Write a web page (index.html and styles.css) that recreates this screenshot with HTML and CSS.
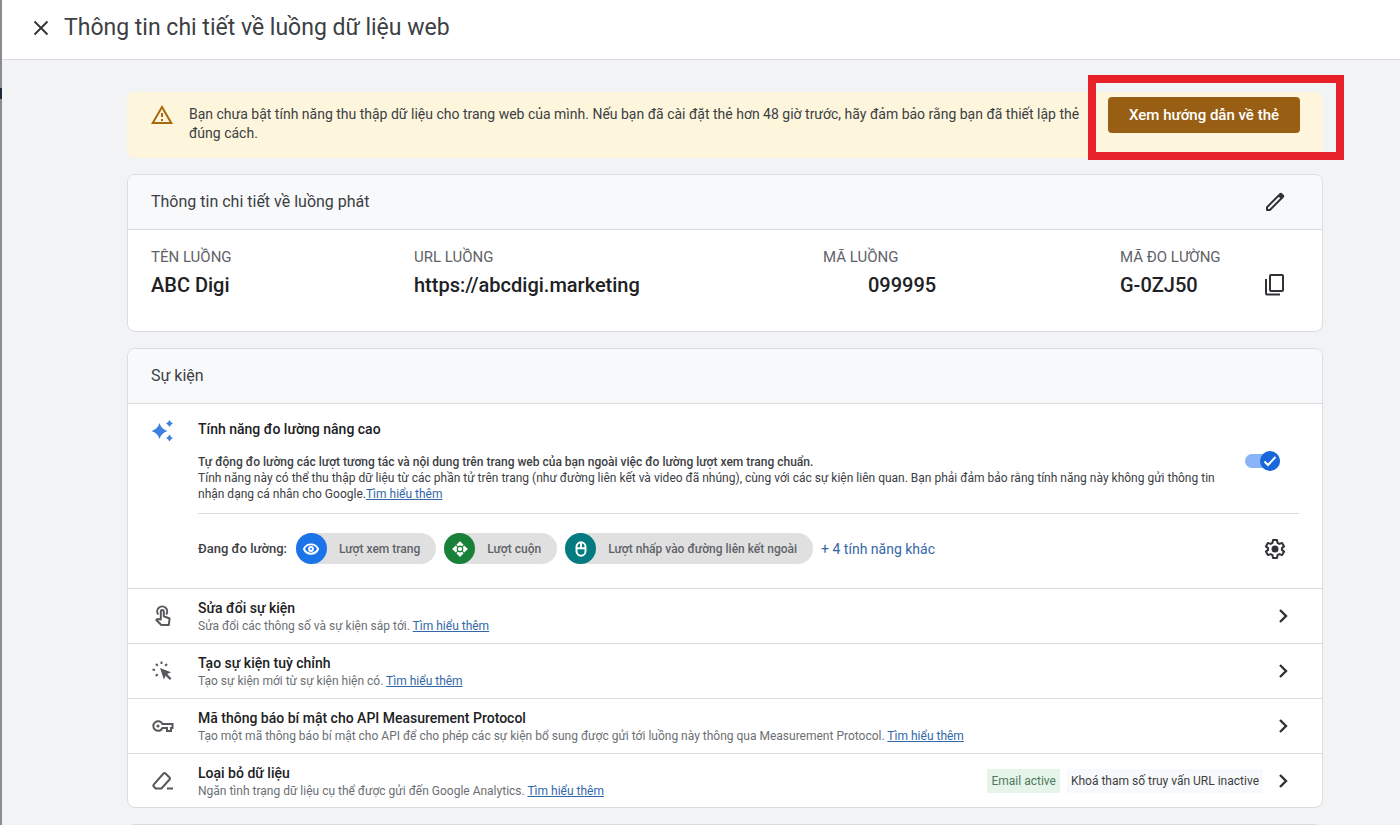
FILE: index.html
```html
<!DOCTYPE html>
<html lang="vi">
<head>
    <meta charset="UTF-8">
    <meta name="viewport" content="width=device-width, initial-scale=1.0">
    <title>Thông tin chi tiết về luồng dữ liệu web</title>
    <link rel="stylesheet" href="styles.css">
</head>
<body>
    <header class="header">
        <button class="icon-button" aria-label="Đóng">
            <svg width="24" height="24" viewBox="0 0 24 24"><path d="M5.5 5.5l13 13M18.5 5.5l-13 13" fill="none" stroke="currentColor" stroke-width="1.8"/></svg>
        </button>
        <h1>Thông tin chi tiết về luồng dữ liệu web</h1>
    </header>

    <main class="content">
        <section class="banner">
            <svg class="banner-icon" width="24" height="24" viewBox="0 0 24 24" fill="currentColor"><path d="M12 5.99L19.53 19H4.47L12 5.99M12 2L1 21h22L12 2zm1 14h-2v2h2v-2zm0-6h-2v4h2v-4z"/></svg>
            <p>Bạn chưa bật tính năng thu thập dữ liệu cho trang web của mình. Nếu bạn đã cài đặt thẻ hơn 48 giờ trước, hãy đảm bảo rằng bạn đã thiết lập thẻ đúng cách.</p>
            <button class="banner-button">Xem hướng dẫn về thẻ</button>
            <div class="highlight"></div>
        </section>

        <section class="card">
            <div class="card-header">
                <h2>Thông tin chi tiết về luồng phát</h2>
                <button class="icon-button" aria-label="Chỉnh sửa">
                    <svg width="24" height="24" viewBox="0 0 24 24" fill="none" stroke="currentColor" stroke-width="2" stroke-linejoin="round"><path d="M4 20v-2.800L17 4.200q.800-.800 1.600 0l1.200 1.200q.800.800 0 1.600L6.800 20z"/><path d="M14.800 5.800l3.400 3.400 2.300-2.700-3-3z" fill="currentColor" stroke="none"/></svg>
                </button>
            </div>
            <div class="stream">
                <dl class="stream-list">
                    <div>
                        <dt>TÊN LUỒNG</dt>
                        <dd>ABC Digi</dd>
                    </div>
                    <div>
                        <dt>URL LUỒNG</dt>
                        <dd>https://abcdigi.marketing</dd>
                    </div>
                    <div>
                        <dt>MÃ LUỒNG</dt>
                        <dd class="stream-id">099995</dd>
                    </div>
                    <div>
                        <dt>MÃ ĐO LƯỜNG</dt>
                        <dd>G-0ZJ50</dd>
                    </div>
                </dl>
                <button class="icon-button" aria-label="Sao chép">
                    <svg width="24" height="24" viewBox="0 0 24 24" fill="none" stroke="currentColor" stroke-width="2"><rect x="7" y="2" width="13" height="16" rx="1"/><path d="M3 6v14.500q0 1 1 1h13"/></svg>
                </button>
            </div>
        </section>

        <section class="card">
            <div class="card-header">
                <h2>Sự kiện</h2>
            </div>

            <div class="enhanced">
                <svg class="sparkle" width="24" height="24" viewBox="0 0 24 24" fill="currentColor"><path d="M8.500 4q1.800 6.200 8 8-6.200 1.800-8 8-1.800-6.200-8-8 6.200-1.800 8-8z"/><path d="M18.500 1q1 2.500 3.500 3.500-2.500 1-3.500 3.500-1-2.500-3.500-3.500 2.500-1 3.500-3.500zM18.500 15.500q1 2.500 3.500 3.500-2.500 1-3.500 3.500-1-2.500-3.500-3.500 2.500-1 3.500-3.500z"/></svg>
                <div class="enhanced-body">
                    <h3>Tính năng đo lường nâng cao</h3>
                    <div class="enhanced-text">
                        <p>
                            <strong>Tự động đo lường các lượt tương tác và nội dung trên trang web của bạn ngoài việc đo lường lượt xem trang chuẩn.</strong><br>
                            Tính năng này có thể thu thập dữ liệu từ các phần tử trên trang (như đường liên kết và video đã nhúng), cùng với các sự kiện liên quan. Bạn phải đảm bảo rằng tính năng này không gửi thông tin nhận dạng cá nhân cho Google.<a href="#">Tìm hiểu thêm</a>
                        </p>
                        <label class="switch">
                            <input type="checkbox" checked aria-label="Tính năng đo lường nâng cao">
                            <span class="switch-thumb">
                                <svg width="16" height="16" viewBox="0 0 16 16"><path d="M2.500 8.500l3.500 3.500 7.500-8" fill="none" stroke="#fff" stroke-width="2"/></svg>
                            </span>
                        </label>
                    </div>
                    <div class="measuring">
                        <span class="measuring-label">Đang đo lường:</span>
                        <span class="chip">
                            <span class="chip-icon blue"><svg width="18" height="18" viewBox="0 0 24 24" fill="none" stroke="#fff" stroke-width="2.600"><path d="M2.500 12C4.300 8 7.800 5.800 12 5.800s7.700 2.200 9.500 6.200c-1.800 4-5.300 6.200-9.500 6.200S4.300 16 2.500 12z"/><circle cx="12" cy="12" r="2.600"/></svg></span>
                            Lượt xem trang
                        </span>
                        <span class="chip">
                            <span class="chip-icon green"><svg width="18" height="18" viewBox="0 0 24 24" fill="#fff"><path d="M12 1.500l4.800 4.800-2 2q-2.800-1.800-5.600 0l-2-2zM12 22.500l4.800-4.800-2-2q-2.800 1.800-5.600 0l-2 2zM1.500 12l4.800-4.800 2 2q-1.800 2.800 0 5.600l-2 2zM22.500 12l-4.800-4.800-2 2q1.800 2.800 0 5.600l2 2z"/><circle cx="12" cy="12" r="2.800"/></svg></span>
                            Lượt cuộn
                        </span>
                        <span class="chip">
                            <span class="chip-icon teal"><svg width="18" height="18" viewBox="0 0 24 24" fill="none" stroke="#fff" stroke-width="2.600"><rect x="6" y="3" width="12" height="18" rx="6"/><path d="M6 11h12M12 3v8"/></svg></span>
                            Lượt nhấp vào đường liên kết ngoài
                        </span>
                        <a href="#" class="more-link">+ 4 tính năng khác</a>
                        <button class="icon-button" aria-label="Cài đặt">
                            <svg width="24" height="24" viewBox="0 0 24 24" fill="none" stroke="currentColor" stroke-width="2" stroke-linejoin="round"><path d="M10 3h4l.500 2.800 1.900 1.100 2.700-1 2 3.500-2.200 1.700v1.800l2.200 1.700-2 3.500-2.700-1-1.900 1.100L14 21h-4l-.500-2.800-1.900-1.100-2.700 1-2-3.500 2.200-1.700v-1.800L2.900 9.400l2-3.500 2.700 1 1.900-1.100z"/><circle cx="12" cy="12" r="2.500" fill="currentColor"/></svg>
                        </button>
                    </div>
                </div>
            </div>

            <div class="row">
                <svg class="row-icon" width="24" height="24" viewBox="0 0 24 24" fill="none" stroke="currentColor" stroke-width="2" stroke-linejoin="round"><path d="M7.200 10.500a5 5 0 1 1 8 0"/><path d="M9.800 15.500V7.500a1.500 1.500 0 0 1 3 0v4.800l5.800 2.200-.800 6.500h-7.500l-5-5 1.200-.900z"/></svg>
                <div class="row-text">
                    <h3>Sửa đổi sự kiện</h3>
                    <p>Sửa đổi các thông số và sự kiện sắp tới. <a href="#">Tìm hiểu thêm</a></p>
                </div>
                <button class="icon-button" aria-label="Mở">
                    <svg width="24" height="24" viewBox="0 0 24 24"><path d="M9 6l6 6-6 6" fill="none" stroke="currentColor" stroke-width="2.400"/></svg>
                </button>
            </div>
            <div class="row">
                <svg class="row-icon" width="24" height="24" viewBox="0 0 24 24" fill="none" stroke="currentColor" stroke-width="2"><path d="M10.500 2.500v2.500M5 5l1.800 1.800M1.500 10.800H4M4.800 17l1.900-1.900M16 5l-1.800 1.800"/><path d="M9 9l11 4.200-3.800 1.900 4.300 4.300-1.600 1.600-4.300-4.300-1.700 3.800z" fill="currentColor" stroke="none"/></svg>
                <div class="row-text">
                    <h3>Tạo sự kiện tuỳ chỉnh</h3>
                    <p>Tạo sự kiện mới từ sự kiện hiện có. <a href="#">Tìm hiểu thêm</a></p>
                </div>
                <button class="icon-button" aria-label="Mở">
                    <svg width="24" height="24" viewBox="0 0 24 24"><path d="M9 6l6 6-6 6" fill="none" stroke="currentColor" stroke-width="2.400"/></svg>
                </button>
            </div>
            <div class="row">
                <svg class="row-icon" width="24" height="24" viewBox="0 0 24 24" fill="none" stroke="currentColor" stroke-width="2"><path d="M11.500 10H21.500v4h-1.500v3h-4v-3h-4.500a4.800 4.800 0 1 1 0-4z"/><circle cx="7" cy="12" r="1.600" fill="currentColor" stroke="none"/></svg>
                <div class="row-text">
                    <h3>Mã thông báo bí mật cho API Measurement Protocol</h3>
                    <p>Tạo một mã thông báo bí mật cho API để cho phép các sự kiện bổ sung được gửi tới luồng này thông qua Measurement Protocol. <a href="#">Tìm hiểu thêm</a></p>
                </div>
                <button class="icon-button" aria-label="Mở">
                    <svg width="24" height="24" viewBox="0 0 24 24"><path d="M9 6l6 6-6 6" fill="none" stroke="currentColor" stroke-width="2.400"/></svg>
                </button>
            </div>
            <div class="row">
                <svg class="row-icon" width="24" height="24" viewBox="0 0 24 24" fill="none" stroke="currentColor" stroke-width="2"><path d="M12.500 4.500q1-1 2 0l4 4q1 1 0 2L10.500 19.500H4.700l-2-2q-.900-.900 0-1.900zM16 19.500h6"/></svg>
                <div class="row-text">
                    <h3>Loại bỏ dữ liệu</h3>
                    <p>Ngăn tình trạng dữ liệu cụ thể được gửi đến Google Analytics. <a href="#">Tìm hiểu thêm</a></p>
                </div>
                <span class="tag tag-active">Email active</span>
                <span class="tag">Khoá tham số truy vấn URL inactive</span>
                <button class="icon-button" aria-label="Mở">
                    <svg width="24" height="24" viewBox="0 0 24 24"><path d="M9 6l6 6-6 6" fill="none" stroke="currentColor" stroke-width="2.400"/></svg>
                </button>
            </div>
        </section>

        <section class="card">
            <div class="card-header"></div>
        </section>
    </main>
</body>
</html>
```

FILE: styles.css
```css
* {
    margin: 0;
    padding: 0;
    box-sizing: border-box;
}

/* the thin strip on the left is the page lying under this panel */
body {
    min-height: 100vh;
    padding-left: 2px;
    background:
        linear-gradient(#1f2937, #1f2937) 0 88px / 2px 11px no-repeat,
        linear-gradient(#8b8c8e, #8b8c8e) 0 0 / 2px 100% no-repeat,
        #f1f3f4;
    color: #3c4043;
    font-family: Roboto, "Noto Sans", sans-serif;
    font-size: 12px;
    line-height: 16px;
}

a {
    color: #3367a8;
}

.icon-button {
    display: flex;
    flex-shrink: 0;
    background: none;
    border: none;
    color: #303236;
    cursor: pointer;
}

.header {
    display: flex;
    align-items: center;
    gap: 11px;
    height: 60px;
    padding: 0 27px 3px;
    background-color: #fff;
    border-bottom: 1px solid #dadce0;
}

.header h1 {
    font-size: 23px;
    line-height: 28px;
    font-weight: 400;
}

.content {
    display: flex;
    flex-direction: column;
    gap: 16px;
    padding: 32px 77px 0 125px;
}

.banner {
    position: relative;
    display: flex;
    align-items: flex-start;
    min-height: 66px;
    padding: 5px 23px;
    background-color: #fdf6dd;
    border-radius: 8px;
}

.banner-icon {
    flex-shrink: 0;
    margin: 6px 15px 0 0;
    color: #a8690f;
}

.banner p {
    flex: 1;
    padding-top: 8px;
    font-size: 14px;
    line-height: 19px;
}

.banner-button {
    height: 36px;
    margin-left: 16px;
    padding: 0 21px;
    background-color: #985f14;
    border: none;
    border-radius: 4px;
    color: #fff;
    font-family: inherit;
    font-size: 15px;
    font-weight: 500;
    cursor: pointer;
}

/* red frame around the call to action */
.highlight {
    position: absolute;
    top: -17px;
    right: -21px;
    width: 256px;
    height: 85px;
    border: 8px solid #e62129;
    pointer-events: none;
}

.card {
    background-color: #fff;
    border: 1px solid #dadce0;
    border-radius: 8px;
    overflow: hidden;
}

.card-header {
    display: flex;
    justify-content: space-between;
    align-items: center;
    height: 55px;
    padding: 0 35px 0 23px;
    background-color: #f8f9fb;
    border-bottom: 1px solid #dadce0;
}

.card-header h2 {
    font-size: 16px;
    line-height: 20px;
    font-weight: 400;
}

.stream {
    display: flex;
    align-items: flex-end;
    padding: 17px 35px 34px 23px;
}

.stream-list {
    flex: 1;
    display: grid;
    grid-template-columns: 263fr 409fr 297fr 143fr;
}

.stream-list dt {
    color: #5f6368;
    font-size: 15px;
    line-height: 20px;
}

.stream-list dd {
    padding-top: 6px;
    color: #202124;
    font-size: 20px;
    line-height: 24px;
    font-weight: 500;
}

.stream-list .stream-id {
    padding-left: 45px;
}

.enhanced {
    display: flex;
    padding: 15px 23px 24px;
}

.enhanced h3,
.row h3 {
    color: #202124;
    font-size: 14px;
    line-height: 20px;
    font-weight: 500;
}

.sparkle {
    flex-shrink: 0;
    margin-right: 23px;
    color: #3f7fe0;
}

.enhanced-body {
    flex: 1;
}

.enhanced-text {
    display: flex;
    justify-content: space-between;
    padding: 15px 19px 11px 0;
    border-bottom: 1px solid #dadce0;
}

.enhanced-text p {
    max-width: 1030px;
}

.enhanced-text strong {
    font-weight: 500;
}

.switch {
    flex-shrink: 0;
    display: flex;
    align-items: center;
    justify-content: flex-end;
    width: 35px;
    height: 14px;
    border-radius: 7px;
    background-color: #8ab4f8;
    cursor: pointer;
}

.switch input {
    appearance: none;
}

.switch-thumb {
    display: flex;
    align-items: center;
    justify-content: center;
    width: 20px;
    height: 20px;
    border-radius: 50%;
    background-color: #1a67db;
}

.measuring {
    display: flex;
    align-items: center;
    gap: 8px;
    padding: 19px 12px 0 0;
}

.measuring-label {
    margin-right: 1px;
    font-size: 13px;
    font-weight: 500;
}

.chip {
    display: flex;
    align-items: center;
    gap: 12px;
    height: 31px;
    padding-right: 16px;
    border-radius: 16px;
    background-color: #e0e0e0;
    color: #5f6368;
    font-weight: 500;
}

.chip-icon {
    display: flex;
    align-items: center;
    justify-content: center;
    width: 31px;
    height: 31px;
    border-radius: 50%;
}

.blue {
    background-color: #1a73e8;
}

.green {
    background-color: #188038;
}

.teal {
    background-color: #047b80;
}

.more-link {
    flex: 1;
    font-size: 14px;
    text-decoration: none;
}

.row {
    display: flex;
    align-items: center;
    height: 55px;
    padding: 0 27px 0 23px;
    border-top: 1px solid #dadce0;
}

.row:last-child {
    height: 54px;
}

.row-icon {
    flex-shrink: 0;
    margin-right: 23px;
    color: #55585c;
}

.row-text {
    flex: 1;
    color: #6b6f74;
}

.tag {
    margin-right: 8px;
    padding: 4px;
    background-color: #f8f9fa;
}

.tag-active {
    margin-right: 7px;
    background-color: #e6f4ea;
    color: #4f7a5b;
}
```
